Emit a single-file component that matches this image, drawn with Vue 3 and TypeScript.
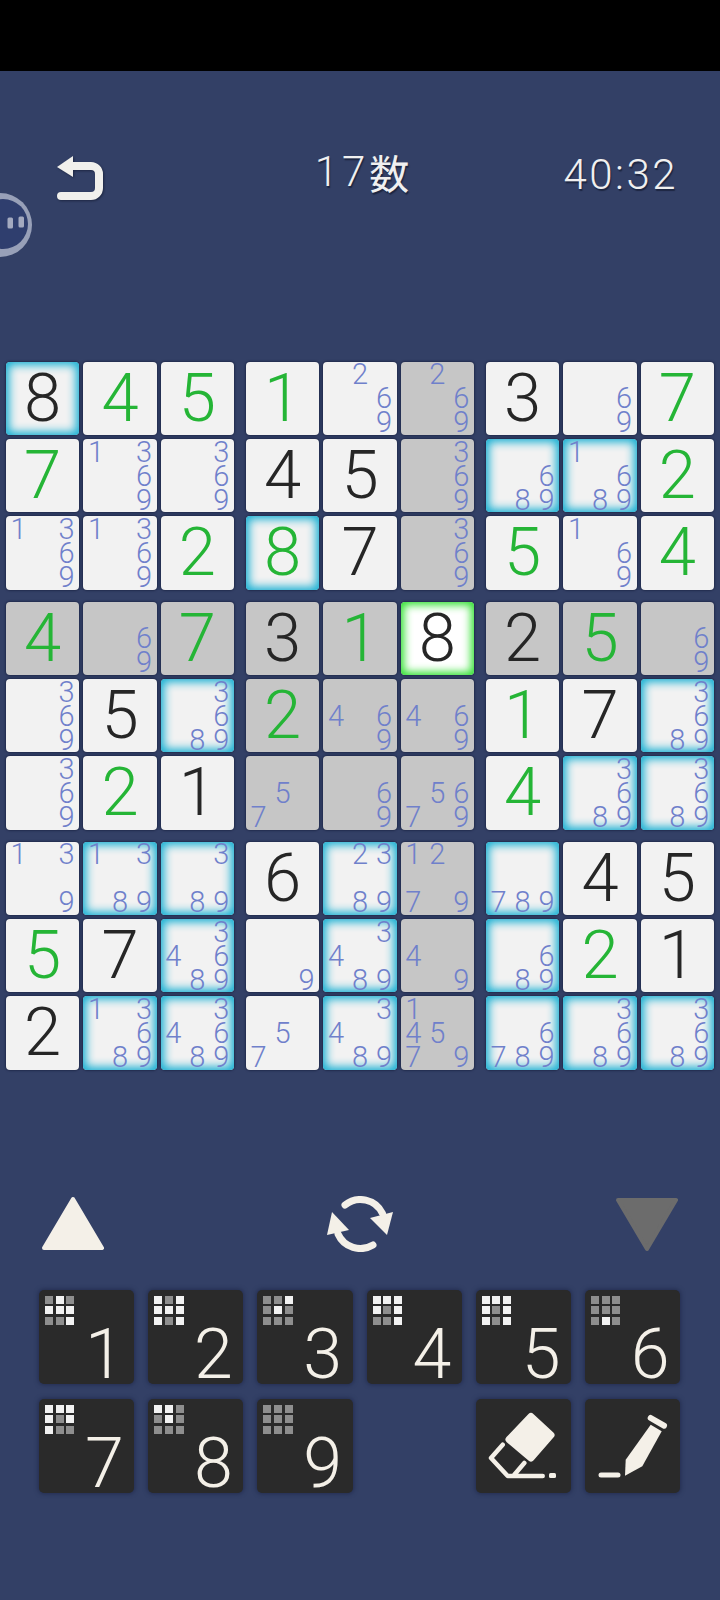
<script setup lang="ts">
interface Cell {
  value: string;
  notes: string;
  green: boolean;
  state: string;
}

// token: d8 = given, g8 = entered, n369 = pencil marks; suffix c = candidate glow, x = grey, s = selected
const rows: string[] = [
  "d8c g4 g5 g1 n269 n269x d3 n69 g7",
  "g7 n1369 n369 d4 d5 n369x n689c n1689c g2",
  "n1369 n1369 g2 g8c d7 n369x g5 n169 g4",
  "g4x n69x g7x d3x g1x d8s d2x g5x n69x",
  "n369 d5 n3689c g2x n469x n469x g1 d7 n3689c",
  "n369 g2 d1 n57x n69x n5679x g4 n3689c n3689c",
  "n139 n1389c n389c d6 n2389c n1279x n789c d4 d5",
  "g5 d7 n34689c n9 n3489c n49x n689c g2 d1",
  "d2 n13689c n34689c n57 n3489c n14579x n6789c n3689c n3689c",
];

function parse(token: string): Cell {
  const kind = token[0];
  const last = token[token.length - 1];
  const state = "cxs".includes(last) ? last : "";
  const body = token.slice(1, state ? -1 : undefined);
  return {
    value: kind === "n" ? "" : body,
    notes: kind === "n" ? body : "",
    green: kind === "g",
    state,
  };
}

const cells = rows.map((r) => r.split(" ").map(parse));

const boxes: Cell[][] = Array.from({ length: 9 }, () => []);
cells.forEach((row, r) =>
  row.forEach((cell, c) => {
    boxes[Math.floor(r / 3) * 3 + Math.floor(c / 3)].push(cell);
  })
);

const slots = ["1", "2", "3", "4", "5", "6", "7", "8", "9"];

const keys = [
  { n: 1, map: "010111001" },
  { n: 2, map: "101111101" },
  { n: 3, map: "001010000" },
  { n: 4, map: "111101001" },
  { n: 5, map: "111101101" },
  { n: 6, map: "000000010" },
  { n: 7, map: "111101100" },
  { n: 8, map: "110010000" },
  { n: 9, map: "000000000" },
];
</script>

<template>
  <div class="screen">
    <div class="status-bar"></div>

    <svg class="pause" width="40" height="70" viewBox="0 0 40 70">
      <circle cx="0" cy="35" r="32" fill="#98a0b8" />
      <circle cx="3" cy="34" r="25" fill="#2f3e6e" />
      <rect x="7.500" y="27.500" width="5.500" height="11" rx="1.500" fill="#a4aac0" />
      <rect x="18.500" y="26.500" width="5.500" height="11" rx="1.500" fill="#a4aac0" />
    </svg>

    <header class="header">
      <svg class="back" width="50" height="44" viewBox="0 0 50 44">
        <path
          d="M14 10H35a8 8 0 0 1 8 8V32a8 8 0 0 1-8 8H5"
          fill="none"
          stroke="#f1f0ec"
          stroke-width="8"
          stroke-linecap="round"
        />
        <path d="M1 11 L17 0 V21 Z" fill="#f1f0ec" />
      </svg>
      <div class="count">17<span class="count-kanji">数</span></div>
      <div class="time">40:32</div>
    </header>

    <section class="board">
      <div v-for="(box, b) in boxes" :key="b" class="box">
        <div
          v-for="(cell, i) in box"
          :key="i"
          class="cell"
          :class="[cell.state && `cell--${cell.state}`, cell.green && 'cell--green']"
        >
          <template v-if="cell.value">{{ cell.value }}</template>
          <div v-else class="notes">
            <span v-for="s in slots" :key="s">{{ cell.notes.includes(s) ? s : "" }}</span>
          </div>
        </div>
      </div>
    </section>

    <section class="controls">
      <svg width="62" height="56" viewBox="0 0 62 56">
        <path d="M31 3 L60 52 H2 Z" fill="#f4f0e8" stroke="#f4f0e8" stroke-width="4" stroke-linejoin="round" />
      </svg>
      <svg width="66" height="56" viewBox="0 0 66 56">
        <g fill="none" stroke="#f4f0e8" stroke-width="7" stroke-linecap="round">
          <path d="M18 9A24.500 24.500 0 0 1 55.500 17.500" />
          <path d="M11 38A24.500 24.500 0 0 0 46 49" />
        </g>
        <path d="M43 22 L66 16 L60 39 Z" fill="#f4f0e8" />
        <path d="M5 16 L0 39 L22 34 Z" fill="#f4f0e8" />
      </svg>
      <svg width="62" height="56" viewBox="0 0 62 56">
        <path d="M31 53 L60 4 H2 Z" fill="#6c6c6c" stroke="#6c6c6c" stroke-width="4" stroke-linejoin="round" />
      </svg>
    </section>

    <section class="keypad">
      <button v-for="key in keys" :key="key.n" class="key" type="button">
        <span class="mini">
          <i v-for="(m, i) in key.map" :key="i" :class="{ on: m === '1' }"></i>
        </span>
        <span class="key-num">{{ key.n }}</span>
      </button>

      <button class="key key--tool key--erase" type="button">
        <svg width="95" height="94" viewBox="0 0 95 94">
          <path
            d="M55 17.500 L75 36 L55 59 L33 40.500 Z"
            fill="#f4f0e8"
            stroke="#f4f0e8"
            stroke-width="7"
            stroke-linejoin="round"
          />
          <path
            d="M26.700 45.700 L15 59 L31.700 77 H66.700 M48.300 64 L38.300 75.700"
            fill="none"
            stroke="#f4f0e8"
            stroke-width="4.500"
            stroke-linecap="round"
            stroke-linejoin="round"
          />
          <rect x="73" y="74" width="7" height="5" rx="1.500" fill="#f4f0e8" />
        </svg>
      </button>
      <button class="key key--tool" type="button">
        <svg width="95" height="94" viewBox="0 0 95 94">
          <path d="M40 76.700 L40.700 60.700 L65.700 25.700 L76.700 32.300 L57.300 67.300 Z" fill="#f4f0e8" />
          <path d="M65.700 19 L79 26.700" stroke="#f4f0e8" stroke-width="6" stroke-linecap="round" />
          <path d="M16 76 H33" stroke="#f4f0e8" stroke-width="5" stroke-linecap="round" />
        </svg>
      </button>
    </section>
  </div>
</template>

<style>
html,
body {
  background: #334066;
}
</style>

<style scoped>
.screen {
  position: relative;
  width: 720px;
  height: 1600px;
  overflow: hidden;
  background: #334066;
  font-family: Roboto, "Noto Sans", sans-serif;
}

.status-bar {
  height: 71px;
  background: #000;
}

.pause {
  position: absolute;
  left: 0;
  top: 190px;
}

.header {
  display: grid;
  grid-template-columns: 1fr auto 1fr;
  align-items: center;
  height: 70px;
  margin-top: 69px;
  padding: 0 42px 0 56px;
  color: #f0f0f0;
  font-weight: 300;
  font-size: 42px;
  line-height: 42px;
  text-shadow: 1px 2px 1px #1d2642;
}

.back {
  margin-top: 6px;
  filter: drop-shadow(1px 1px 1px #1d2642);
}

.count {
  display: flex;
  align-items: center;
  margin-bottom: 6px;
  letter-spacing: 4px;
  transform: translateX(-5px);
}

.count-kanji {
  font-family: "Noto Sans CJK JP", sans-serif;
  font-size: 40px;
  font-weight: 400;
  letter-spacing: 0;
}

.time {
  text-align: right;
  letter-spacing: 2.500px;
}

.board {
  display: grid;
  grid-template-columns: repeat(3, 228px);
  gap: 12px;
  margin-top: 151.670px;
  padding: 0 6px;
}

.box {
  display: grid;
  grid-template-columns: repeat(3, 1fr);
  grid-auto-rows: 73.330px;
  gap: 4px;
}

.cell {
  display: flex;
  align-items: center;
  justify-content: center;
  border-radius: 4px;
  background: #f2f2f2;
  box-shadow: 0 0 2px 1px #212b4c;
  color: #262626;
  font-size: 67px;
  font-weight: 350;
  line-height: 1;
}

.cell--green {
  color: #25b536;
}

.cell--x {
  background: #c6c6c6;
}

.cell--c {
  box-shadow: 0 0 2px 1px #212b4c, inset 0 0 10px 3px #12aed2;
}

.cell--s {
  background: #fff;
  box-shadow: 0 0 2px 1px #212b4c, inset 0 0 9px 3px #2ee02e;
}

.notes {
  display: grid;
  grid-template-columns: repeat(3, 24px);
  grid-auto-rows: 24px;
}

.notes span {
  color: #6f80cb;
  font-size: 29px;
  font-weight: 300;
  line-height: 24px;
  text-align: center;
}

.controls {
  display: flex;
  align-items: center;
  justify-content: space-between;
  height: 56px;
  margin-top: 126px;
  padding: 0 42px;
}

.keypad {
  display: grid;
  grid-template-columns: repeat(6, 95.300px);
  grid-auto-rows: 94.500px;
  gap: 14.500px 13.900px;
  margin-top: 38px;
  padding-left: 39px;
}

.key {
  display: flex;
  flex-direction: column;
  justify-content: space-between;
  padding: 0;
  border: none;
  border-radius: 5px;
  background: #2a2a2a;
  box-shadow: 0 0 4px 1px #232d50;
  color: #f4f0e8;
  font-family: inherit;
}

.key--erase {
  grid-column: 5;
}

.mini {
  display: grid;
  grid-template-columns: repeat(3, 8px);
  grid-auto-rows: 8px;
  gap: 2.670px;
  margin: 6px 0 0 6px;
}

.mini i {
  background: #8e8e8e;
}

.mini i.on {
  background: #f2f2f2;
}

.key-num {
  align-self: flex-end;
  width: 40px;
  height: 50px;
  margin: 0 10px 5px 0;
  font-size: 70px;
  font-weight: 350;
  line-height: 50px;
  text-align: center;
}
</style>
